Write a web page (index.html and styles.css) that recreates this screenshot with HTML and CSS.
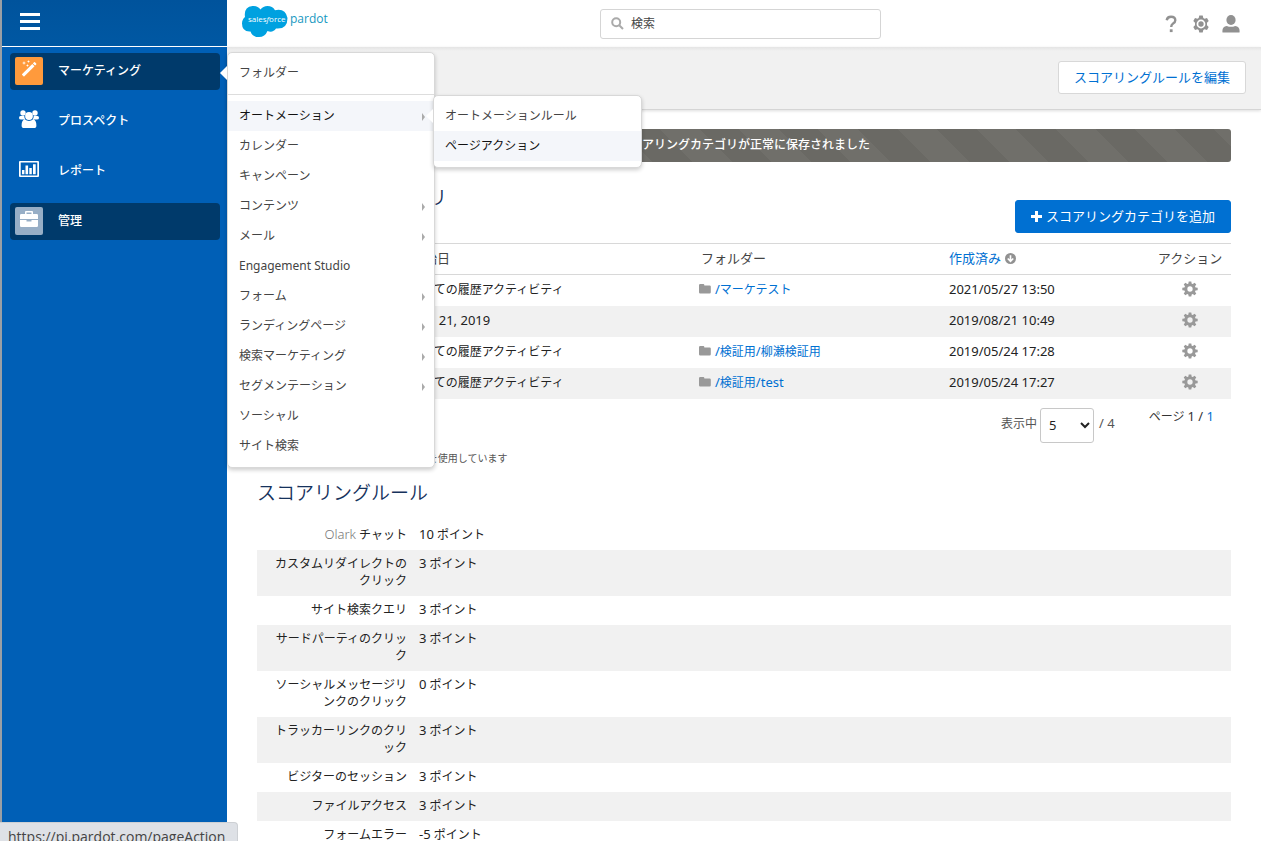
FILE: index.html
```html
<!DOCTYPE html>
<html lang="ja">
<head>
<meta charset="utf-8">
<title>スコアリング - Pardot</title>
<link rel="stylesheet" href="styles.css">
</head>
<body>
<svg class="sprite" aria-hidden="true">
  <symbol id="cog" viewBox="0.5 0.5 15 15">
    <path fill-rule="evenodd" d="M6.800 1h2.400l.4 2 1 .4 1.700-1.200 1.600 1.600-1.200 1.700.5 1.100 2 .3v2.300l-2 .3-.5 1.100 1.200 1.700-1.600 1.600-1.700-1.200-1 .4-.4 2H6.800l-.4-2-1-.4-1.700 1.200-1.600-1.600 1.200-1.700-.5-1.100-2-.3V6.900l2-.3.5-1.100-1.200-1.700 1.600-1.600 1.700 1.200 1-.4zM8 5.500a2.500 2.500 0 1 0 0 5 2.500 2.500 0 0 0 0-5z"/>
  </symbol>
  <symbol id="folder" viewBox="0 0 12 10">
    <path d="M1.200 0h3.200q.9 0 .9 1v.4h5.300q1.200 0 1.200 1.200v5.700q0 1.200-1.200 1.200H1.200Q0 9.500 0 8.300V1.200Q0 0 1.200 0z"/>
  </symbol>
</svg>
<div class="app">
  <aside class="sidebar">
    <div class="sidebar-top">
      <button class="burger" aria-label="メニュー"><span></span><span></span><span></span></button>
    </div>
    <nav class="nav">
      <a class="nav-item active" href="#">
        <span class="nav-icon orange"><svg width="18" height="18" viewBox="0 0 18 18"><path d="M2.200 14.100 12.300 4l2.200 2.200L4.400 16.300q-.5.400-.9 0l-1.300-1.300q-.4-.5 0-.9z"/><path d="M12.900 3.400 14 2.300q.5-.4 1 0L16.200 3.500q.4.500 0 1l-1.100 1.100z"/><path d="M4 1l.5 1.500L6 3l-1.500.5L4 5l-.5-1.500L2 3l1.500-.5zM8.500 0l.4 1.100 1.100.4-1.100.4-.4 1.100-.4-1.100L7 1.500l1.100-.4zM7.500 4l.4 1.100 1.100.4-1.100.4-.4 1.100-.4-1.100L6 5.500l1.100-.4z"/></svg></span>
        <span>マーケティング</span>
      </a>
      <a class="nav-item" href="#">
        <span class="nav-icon"><svg width="20" height="18" viewBox="0 0 20 18"><circle cx="4" cy="3" r="2.700"/><circle cx="16" cy="3" r="2.700"/><circle cx="10" cy="6" r="3.900"/><path d="M1.500 6h3.800Q5.200 8.500 6.500 9.600H2.200Q0 9.600 0 8 0 6 1.500 6zM18.500 6h-3.800q.1 2.500-1.200 3.600h4.300Q20 9.600 20 8q0-2-1.500-2zM5.800 9.600q4.200 2.600 8.400 0 3.200.6 3.200 5.800 0 2.600-2.500 2.600H5.100q-2.500 0-2.500-2.600 0-5.200 3.200-5.800z"/></svg></span>
        <span>プロスペクト</span>
      </a>
      <a class="nav-item" href="#">
        <span class="nav-icon"><svg width="20" height="16" viewBox="0 0 20 16"><path fill-rule="evenodd" d="M1 0h18q1 0 1 1v14q0 1-1 1H1q-1 0-1-1V1q0-1 1-1zm.7 1.600v12.800h16.600V1.600z"/><path d="M3 9h2.400v4.200H3zM6.500 4.500h2.600v8.700H6.500zM10.300 7h2.500v6.200h-2.500zM14 3.200h2.700v10H14z"/></svg></span>
        <span>レポート</span>
      </a>
      <a class="nav-item active" href="#">
        <span class="nav-icon gray"><svg width="18" height="16" viewBox="0 0 18 16"><path fill-rule="evenodd" d="M6 0h6q1 0 1 1v2h3.700Q18 3 18 4.300V8H0V4.300Q0 3 1.300 3H5V1q0-1 1-1zm.5 1.500V3h5V1.500z"/><path d="M0 9h6.500v1.400h5V9H18v5.700q0 1.300-1.300 1.300H1.300Q0 16 0 14.700z"/></svg></span>
        <span>管理</span>
      </a>
    </nav>
  </aside>

  <div class="page">
    <header class="topbar">
      <a class="logo" href="#" aria-label="salesforce pardot">
        <svg width="90" height="34" viewBox="0 0 90 34">
          <path fill="#00a1e0" d="M19.500 4.500Q22 1 26.500 1q5 0 7.500 4.200Q44.500 3 46.500 13 46.500 24.500 35 23.500q-3 4.500-8.500 2.600-2.500 6-8.500 6-6.500 0-8.500-5.700Q1 27 1 18.500 1 14.500 4 12 2.500 2 11.500 1q5-.5 8 3.500z"/>
          <text x="7" y="17" class="logo-sf">sales<tspan font-style="italic">f</tspan>orce</text>
          <text x="49" y="18" class="logo-pardot">pardot</text>
        </svg>
      </a>
      <label class="search">
        <svg width="13" height="13" viewBox="0 0 13 13"><circle cx="5.200" cy="5.200" r="4"/><path d="M8.200 8.200 12 12"/></svg>
        <input type="text" placeholder="検索" aria-label="検索">
      </label>
      <div class="tools">
        <button aria-label="ヘルプ"><svg width="18" height="18" viewBox="0 0 18 18"><path d="M4.700 5.200Q5.300 1.700 9 1.700q4.300 0 4.300 3.600 0 1.900-2.200 3.200Q9.200 9.700 9.200 12" fill="none" stroke="#919191" stroke-width="2.400"/><rect x="7.800" y="14.300" width="2.800" height="2.800"/></svg></button>
        <button aria-label="設定"><svg width="18" height="18" viewBox="0 0 18 18"><path fill-rule="evenodd" d="M7.300.5h3.400l.6 2.400 1.300.8 2.400-.7 1.700 2.900L15 7.700v2.600l1.700 1.800L15 15l-2.400-.7-1.300.8-.6 2.400H7.300l-.6-2.400-1.300-.8L3 15l-1.700-2.900L3 10.300V7.700L1.300 5.900 3 3l2.400.7 1.300-.8zM9 4.600a4.400 4.400 0 1 0 0 8.800 4.400 4.400 0 0 0 0-8.800z"/><circle cx="9" cy="9" r="2.700"/></svg></button>
        <button aria-label="アカウント"><svg width="18" height="18" viewBox="0 0 18 18"><ellipse cx="9" cy="5" rx="4.600" ry="4.900"/><path d="M.5 17.500q-.8-6 4.300-6.500 4.200 1.700 8.400 0 5.100.5 4.300 6.500z"/></svg></button>
      </div>
    </header>
    <div class="actionbar">
      <button class="btn">スコアリングルールを編集</button>
    </div>

    <main class="content">
      <div class="alert" role="status">スコアリングカテゴリが正常に保存されました</div>

      <div class="section-head">
        <h1>スコアリングカテゴリ</h1>
        <button class="btn primary"><svg width="11" height="11" viewBox="0 0 11 11"><path d="M4 0h3v4h4v3H7v4H4V7H0V4h4z"/></svg>スコアリングカテゴリを追加</button>
      </div>

      <table class="categories">
        <colgroup><col class="c-name"><col class="c-start"><col class="c-folder"><col><col class="c-action"></colgroup>
        <thead>
          <tr><th></th><th>開始日</th><th>フォルダー</th><th><a href="#">作成済み</a><svg class="sort" width="11" height="11" viewBox="0 0 12 12"><circle cx="6" cy="6" r="6"/><path d="M6 2.500v6M3 6l3 3 3-3" fill="none" stroke="#fff" stroke-width="1.800"/></svg></th><th>アクション</th></tr>
        </thead>
        <tbody>
          <tr><td></td><td>すべての履歴アクティビティ</td><td><svg class="fold"><use href="#folder"/></svg><a href="#"><span class="lat">/</span>マーケテスト</a></td><td class="lat">2021/05/27 13:50</td><td><button aria-label="アクション"><svg><use href="#cog"/></svg></button></td></tr>
          <tr><td></td><td class="lat">Aug 21, 2019</td><td></td><td class="lat">2019/08/21 10:49</td><td><button aria-label="アクション"><svg><use href="#cog"/></svg></button></td></tr>
          <tr><td></td><td>すべての履歴アクティビティ</td><td><svg class="fold"><use href="#folder"/></svg><a href="#"><span class="lat">/</span>検証用<span class="lat">/</span>柳瀬検証用</a></td><td class="lat">2019/05/24 17:28</td><td><button aria-label="アクション"><svg><use href="#cog"/></svg></button></td></tr>
          <tr><td></td><td>すべての履歴アクティビティ</td><td><svg class="fold"><use href="#folder"/></svg><a href="#"><span class="lat">/</span>検証用<span class="lat">/test</span></a></td><td class="lat">2019/05/24 17:27</td><td><button aria-label="アクション"><svg><use href="#cog"/></svg></button></td></tr>
        </tbody>
      </table>

      <div class="pager">
        <label class="per-page" for="count">表示中</label>
        <select id="count"><option>5</option></select>
        <span class="total">/ 4</span>
        <span class="pages">ページ <span class="lat">1 / <a href="#">1</a></span></span>
      </div>

      <p class="usage">25 個中 14 個のスコアリングカテゴリを使用しています</p>

      <h2>スコアリングルール</h2>
      <table class="rules">
        <tr><th scope="row"><span class="lat muted">Olark</span> チャット</th><td><span class="lat">10</span> ポイント</td></tr>
        <tr><th scope="row">カスタムリダイレクトのクリック</th><td><span class="lat">3</span> ポイント</td></tr>
        <tr><th scope="row">サイト検索クエリ</th><td><span class="lat">3</span> ポイント</td></tr>
        <tr><th scope="row">サードパーティのクリック</th><td><span class="lat">3</span> ポイント</td></tr>
        <tr><th scope="row">ソーシャルメッセージリンクのクリック</th><td><span class="lat">0</span> ポイント</td></tr>
        <tr><th scope="row">トラッカーリンクのクリック</th><td><span class="lat">3</span> ポイント</td></tr>
        <tr><th scope="row">ビジターのセッション</th><td><span class="lat">3</span> ポイント</td></tr>
        <tr><th scope="row">ファイルアクセス</th><td><span class="lat">3</span> ポイント</td></tr>
        <tr><th scope="row">フォームエラー</th><td><span class="lat">-5</span> ポイント</td></tr>
      </table>
    </main>
  </div>
</div>

<ul class="menu">
  <li class="first"><a href="#">フォルダー</a></li>
  <li class="more on"><a href="#">オートメーション</a>
    <ul class="menu submenu">
      <li><a href="#">オートメーションルール</a></li>
      <li class="on"><a href="#">ページアクション</a></li>
    </ul>
  </li>
  <li><a href="#">カレンダー</a></li>
  <li><a href="#">キャンペーン</a></li>
  <li class="more"><a href="#">コンテンツ</a></li>
  <li class="more"><a href="#">メール</a></li>
  <li><a href="#">Engagement Studio</a></li>
  <li class="more"><a href="#">フォーム</a></li>
  <li class="more"><a href="#">ランディングページ</a></li>
  <li class="more"><a href="#">検索マーケティング</a></li>
  <li class="more"><a href="#">セグメンテーション</a></li>
  <li><a href="#">ソーシャル</a></li>
  <li><a href="#">サイト検索</a></li>
</ul>

<div class="status">https://pi.pardot.com/pageAction</div>
</body>
</html>
```
FILE: styles.css
```css
* { box-sizing: border-box; }

body {
  margin: 0;
  height: 100vh;
  overflow: hidden;
  position: relative;
  background: #fff;
  color: #222;
  font: 12px/17px "Noto Sans", "Noto Sans CJK JP", sans-serif;
}

a { color: #0070d2; text-decoration: none; }
button { border: 0; padding: 0; background: none; font: inherit; cursor: pointer; }
ul { list-style: none; margin: 0; padding: 0; }
h1, h2 {
  margin: 0;
  color: #16325c;
  font-size: 19px;
  line-height: 24px;
  font-weight: 350;
  font-family: "Noto Sans CJK JP", sans-serif;
}
.sprite { position: absolute; width: 0; height: 0; }
.lat { font-size: 13px; }
.muted { color: #777; font-weight: 300; }

.app { display: grid; grid-template-columns: 227px minmax(0, 1fr); min-height: 100%; }

/* Sidebar */
.sidebar { background: #005fb6; border-left: 2px solid #9a9fa5; }
.sidebar-top {
  height: 47px;
  padding: 13px 18px;
  background: linear-gradient(#00539c, #0058a3);
  border-bottom: 1px solid #fff;
}
.burger { display: grid; gap: 4px; width: 20px; }
.burger span { height: 3px; background: #fff; }
.nav { display: grid; gap: 13px; padding: 6px 7px 0 8px; }
.nav-item {
  display: flex;
  align-items: center;
  gap: 15px;
  height: 37px;
  padding: 0 5px 2px;
  border-radius: 4px;
  color: #fff;
  font-weight: 500;
}
.nav-item.active { background: #003a6b; }
.nav-icon {
  display: grid;
  place-items: center;
  width: 28px;
  height: 28px;
  padding-bottom: 4px;
  border-radius: 2px;
}
.nav-icon svg { fill: #fff; }
.orange { background: #ff9a3c; }
.gray { background: #97aec6; }

/* Header */
.topbar {
  display: grid;
  grid-template-columns: 1fr 281px 1fr;
  align-items: center;
  height: 47px;
  padding: 0 21px 0 14px;
}
.logo { display: flex; align-self: start; padding-top: 5px; }
.logo-sf { fill: #fff; font: 8px "Open Sans", sans-serif; }
.logo-pardot { fill: #1798c1; font: 12px "Open Sans", sans-serif; }
.search {
  display: flex;
  align-items: center;
  gap: 7px;
  height: 30px;
  padding: 0 10px 1px;
  border: 1px solid #d5d5d5;
  border-radius: 3px;
}
.search svg { fill: none; stroke: #aaa; stroke-width: 2; }
.search input { flex: 1; min-width: 0; border: 0; padding: 0; outline: 0; font: inherit; }
.search input::placeholder { color: #444; opacity: 1; }
.tools { display: flex; justify-content: flex-end; gap: 12px; }
.tools svg { display: block; fill: #919191; }

.actionbar {
  display: flex;
  justify-content: flex-end;
  align-items: center;
  height: 63px;
  padding: 0 15px 2px;
  background: linear-gradient(#e4e4e4, #f1f1f1 4px);
  border-bottom: 1px solid #d5d5d5;
  box-shadow: 0 1px 3px #0002;
}
.btn {
  height: 33px;
  padding: 0 15px;
  border: 1px solid #d8d8d8;
  border-radius: 3px;
  background: #fff;
  color: #0070d2;
  font-size: 13px;
}
.btn.primary {
  display: flex;
  align-items: center;
  align-self: flex-end;
  gap: 4px;
  border-color: #0070d2;
  background: #0070d2;
  color: #fff;
}
.btn svg { fill: #fff; }

/* Content */
.content { padding: 19px 30px 0; }
.alert {
  padding: 7px 8px 9px;
  border-radius: 3px;
  background: repeating-linear-gradient(45deg, #6a6964 0 28px, #706f6a 28px 56px);
  color: #fff;
  font-weight: 500;
  text-align: center;
}
.section-head {
  display: flex;
  justify-content: space-between;
  height: 48px;
  margin: 23px 0 10px;
}

table { width: 100%; border-collapse: collapse; }
.categories { table-layout: fixed; border-top: 1px solid #d8d8d8; }
.c-name { width: 148px; }
.c-start { width: 290px; }
.c-folder { width: 248px; }
.c-action { width: 82px; }
.categories th, .categories td { height: 31px; padding: 0 6px 2px; text-align: left; font-weight: 400; }
.categories th { font-size: 13px; color: #444; border-bottom: 1px solid #d8d8d8; }
.categories td:nth-child(3) { padding-left: 4px; }
.categories th:last-child, .categories td:last-child { text-align: center; }
.categories tbody tr:nth-child(even) { background: #f1f1f1; }
.categories td button { display: block; margin: 0 auto; }
.categories td button svg { display: block; width: 16px; height: 16px; fill: #999; }
.fold { width: 12px; height: 10px; margin-right: 4px; fill: #999; }
.sort { margin-left: 4px; fill: #919191; vertical-align: -1px; }

.pager { display: flex; align-items: center; padding: 9px 17px 0 0; justify-content: flex-end; color: #555; }
.per-page, .total { padding-bottom: 3px; }
.pager select {
  width: 54px;
  height: 35px;
  margin: 0 5px 0 3px;
  padding: 0 4px;
  border: 1px solid #c8c8c8;
  border-radius: 3px;
  background: #fff;
  color: #222;
  font: 13px "Noto Sans", sans-serif;
}
.total { font-size: 13px; }
.pages { align-self: flex-start; margin-left: 34px; color: #333; }
.usage { margin: 7px 0 13px; color: #555; font-size: 10px; }

.rules { margin-top: 17px; }
.rules tr:nth-child(even) { background: #f1f1f1; }
.rules th, .rules td { padding: 5px 6px 7px; vertical-align: top; font-weight: 400; line-height: 17px; text-align: left; }
.rules th { width: 156px; padding-left: 12px; text-align: right; line-break: loose; }

/* Fly-out menus */
.menu {
  position: absolute;
  top: 52px;
  left: 227px;
  width: 208px;
  padding: 5px 0 6px;
  border: 1px solid #d8d8d8;
  border-radius: 5px;
  background: #fff;
  box-shadow: 0 2px 4px #0003;
}
.menu li { position: relative; }
.menu a { display: block; padding: 0 11px; line-height: 30px; color: #444; }
.menu .first { padding-bottom: 6px; margin-bottom: 6px; border-bottom: 1px solid #ddd; }
.menu .on { background: #f4f6fa; }
.menu .on > a { color: #111; }
.more::after {
  content: "";
  position: absolute;
  top: 12px;
  right: 9px;
  border: 4px solid transparent;
  border-left: 3px solid #aaa;
  border-right: 0;
}
.menu::before {
  content: "";
  position: absolute;
  top: 13px;
  left: -8px;
  border: 7px solid transparent;
  border-right-color: #fff;
  border-left: 0;
}
.submenu { top: -6px; left: 205px; width: 209px; z-index: 1; }

.status {
  position: absolute;
  left: 0;
  bottom: 0;
  height: 19px;
  padding: 3px 12px 0 8px;
  overflow: hidden;
  border: 1px solid #cdd0d4;
  border-width: 1px 1px 0 0;
  border-radius: 0 4px 0 0;
  background: #dee1e6;
  color: #444;
  font: 14px/22px "Open Sans", sans-serif;
}
```
